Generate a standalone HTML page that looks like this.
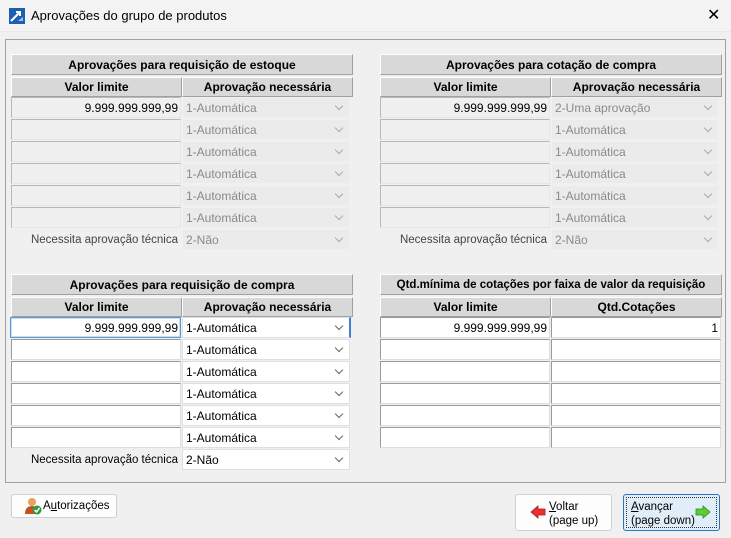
<!DOCTYPE html>
<html><head><meta charset="utf-8"><style>
*{box-sizing:border-box;margin:0;padding:0}
body{width:731px;height:538px;background:#f0f0f0;font-family:"Liberation Sans",sans-serif;font-size:12px;position:relative;overflow:hidden;color:#000}
.a{position:absolute}
.title{left:0;top:0;width:731px;height:32px;background:#f3f3f3;border-bottom:1px solid #e8e8e8}
.panel{left:5px;top:39px;width:721px;height:444px;border:1px solid #a0a0a0;background:#f0f0f0}
.hdr{height:21px;background:#d8d8d8;border:1px solid #fff;border-right-color:#a0a0a0;border-bottom-color:#a0a0a0;font-weight:bold;text-align:center;line-height:20px;font-size:12px}
.ch{height:20px;background:#d8d8d8;border:1px solid #fff;border-right-color:#a0a0a0;border-bottom-color:#a0a0a0;font-weight:bold;text-align:center;line-height:19px}
.tf{height:21px;background:#fff;border:1px solid #aaa;border-color:#999 #ddd #ddd #999;text-align:right;padding-right:2px;line-height:20px}
.tf.d{background:#f0f0f0;border-color:#b8b8b8 #e6e6e6 #e6e6e6 #b8b8b8}
.cb{height:21px;background:#fff;border:1px solid #e0e0e0;padding-left:3px;line-height:20px}
.cb.d{background:#ebebeb;border-color:#f0f0f0;color:#8a8a8a}
.cb:after{content:"";position:absolute;right:7px;top:5px;width:5px;height:5px;border-right:1px solid #666;border-bottom:1px solid #666;transform:rotate(45deg)}
.cb.d:after{border-color:#aaa}
.lbl{text-align:right;line-height:22px;font-size:11.5px}
.lbl.d{color:#444}
.btn{background:#fdfdfd;border:1px solid #d0d0d0;border-radius:3px}
</style></head><body>
<div class="a title"></div>
<svg class="a" style="left:9px;top:8px" width="16" height="16"><rect width="16" height="16" fill="#1f5fb0"/><path d="M2 13 L10 5 M7 4 L11 4 L11 8" stroke="#fff" stroke-width="2" fill="none"/><path d="M9 13 L14 9 L14 13Z" fill="#9fc3ea"/></svg>
<div class="a" style="left:31px;top:8px;font-size:13px">Aprovações do grupo de produtos</div>
<div class="a" style="left:707px;top:5px;font-size:16px">✕</div>
<div class="a panel"></div>

<div class="a hdr" style="left:11px;top:54px;width:342px">Aprovações para requisição de estoque</div>
<div class="a ch" style="left:11px;top:77px;width:171px">Valor limite</div>
<div class="a ch" style="left:182px;top:77px;width:171px">Aprovação necessária</div>
<div class="a tf d" style="left:11px;top:97px;width:170px">9.999.999.999,99</div><div class="a cb d" style="left:182px;top:97px;width:168px">1-Automática</div>
<div class="a tf d" style="left:11px;top:119px;width:170px"></div><div class="a cb d" style="left:182px;top:119px;width:168px">1-Automática</div>
<div class="a tf d" style="left:11px;top:141px;width:170px"></div><div class="a cb d" style="left:182px;top:141px;width:168px">1-Automática</div>
<div class="a tf d" style="left:11px;top:163px;width:170px"></div><div class="a cb d" style="left:182px;top:163px;width:168px">1-Automática</div>
<div class="a tf d" style="left:11px;top:185px;width:170px"></div><div class="a cb d" style="left:182px;top:185px;width:168px">1-Automática</div>
<div class="a tf d" style="left:11px;top:207px;width:170px"></div><div class="a cb d" style="left:182px;top:207px;width:168px">1-Automática</div>
<div class="a lbl d" style="left:11px;top:229px;width:167px">Necessita aprovação técnica</div><div class="a cb d" style="left:182px;top:229px;width:168px">2-Não</div>

<div class="a hdr" style="left:380px;top:54px;width:342px">Aprovações para cotação de compra</div>
<div class="a ch" style="left:380px;top:77px;width:171px">Valor limite</div>
<div class="a ch" style="left:551px;top:77px;width:171px">Aprovação necessária</div>
<div class="a tf d" style="left:380px;top:97px;width:170px">9.999.999.999,99</div><div class="a cb d" style="left:551px;top:97px;width:168px">2-Uma aprovação</div>
<div class="a tf d" style="left:380px;top:119px;width:170px"></div><div class="a cb d" style="left:551px;top:119px;width:168px">1-Automática</div>
<div class="a tf d" style="left:380px;top:141px;width:170px"></div><div class="a cb d" style="left:551px;top:141px;width:168px">1-Automática</div>
<div class="a tf d" style="left:380px;top:163px;width:170px"></div><div class="a cb d" style="left:551px;top:163px;width:168px">1-Automática</div>
<div class="a tf d" style="left:380px;top:185px;width:170px"></div><div class="a cb d" style="left:551px;top:185px;width:168px">1-Automática</div>
<div class="a tf d" style="left:380px;top:207px;width:170px"></div><div class="a cb d" style="left:551px;top:207px;width:168px">1-Automática</div>
<div class="a lbl d" style="left:380px;top:229px;width:167px">Necessita aprovação técnica</div><div class="a cb d" style="left:551px;top:229px;width:168px">2-Não</div>

<div class="a hdr" style="left:11px;top:274px;width:342px">Aprovações para requisição de compra</div>
<div class="a ch" style="left:11px;top:297px;width:171px">Valor limite</div>
<div class="a ch" style="left:182px;top:297px;width:171px">Aprovação necessária</div>
<div class="a tf" style="left:10px;top:317px;width:171px;border:1px solid #5b9bd5;box-shadow:inset 0 0 0 1px #cde">9.999.999.999,99</div><div class="a cb" style="left:182px;top:317px;width:169px;border-right:2px solid #3c7fd0">1-Automática</div>
<div class="a tf" style="left:11px;top:339px;width:170px"></div><div class="a cb" style="left:182px;top:339px;width:168px">1-Automática</div>
<div class="a tf" style="left:11px;top:361px;width:170px"></div><div class="a cb" style="left:182px;top:361px;width:168px">1-Automática</div>
<div class="a tf" style="left:11px;top:383px;width:170px"></div><div class="a cb" style="left:182px;top:383px;width:168px">1-Automática</div>
<div class="a tf" style="left:11px;top:405px;width:170px"></div><div class="a cb" style="left:182px;top:405px;width:168px">1-Automática</div>
<div class="a tf" style="left:11px;top:427px;width:170px"></div><div class="a cb" style="left:182px;top:427px;width:168px">1-Automática</div>
<div class="a lbl" style="left:11px;top:449px;width:167px">Necessita aprovação técnica</div><div class="a cb" style="left:182px;top:449px;width:168px">2-Não</div>

<div class="a hdr" style="left:380px;top:274px;width:342px;font-size:11.5px">Qtd.mínima de cotações por faixa de valor da requisição</div>
<div class="a ch" style="left:380px;top:297px;width:171px">Valor limite</div>
<div class="a ch" style="left:551px;top:297px;width:171px">Qtd.Cotações</div>
<div class="a tf" style="left:380px;top:317px;width:170px">9.999.999.999,99</div><div class="a tf" style="left:551px;top:317px;width:170px">1</div>
<div class="a tf" style="left:380px;top:339px;width:170px"></div><div class="a tf" style="left:551px;top:339px;width:170px"></div>
<div class="a tf" style="left:380px;top:361px;width:170px"></div><div class="a tf" style="left:551px;top:361px;width:170px"></div>
<div class="a tf" style="left:380px;top:383px;width:170px"></div><div class="a tf" style="left:551px;top:383px;width:170px"></div>
<div class="a tf" style="left:380px;top:405px;width:170px"></div><div class="a tf" style="left:551px;top:405px;width:170px"></div>
<div class="a tf" style="left:380px;top:427px;width:170px"></div><div class="a tf" style="left:551px;top:427px;width:170px"></div>

<div class="a btn" style="left:11px;top:494px;width:106px;height:24px"></div>
<svg class="a" style="left:24px;top:497px" width="18" height="18"><circle cx="8" cy="5" r="4" fill="#e8a060"/><path d="M1 17 Q1 9 8 9 Q15 9 15 17Z" fill="#c85020"/><circle cx="13" cy="13" r="4.5" fill="#2a9a3a"/><path d="M10.5 13 L12.5 15 L15.5 11" stroke="#fff" stroke-width="1.5" fill="none"/></svg>
<div class="a" style="left:43px;top:500px;font-size:11.5px">A<u>u</u>torizações</div>

<div class="a btn" style="left:515px;top:494px;width:97px;height:37px"></div>
<svg class="a" style="left:530px;top:505px" width="16" height="14"><path d="M1 7 L8 1 L8 4 L15 4 L15 10 L8 10 L8 13Z" fill="#e83030" stroke="#b01818" stroke-width="0.8"/></svg>
<div class="a" style="left:549px;top:500px;font-size:11.5px;line-height:14px"><u>V</u>oltar<br>(page up)</div>

<div class="a btn" style="left:623px;top:494px;width:97px;height:37px;background:#e0eef9;border:1px solid #2b72c8"></div>
<div class="a" style="left:626px;top:497px;width:91px;height:31px;border:1px dotted #333"></div>
<svg class="a" style="left:695px;top:505px" width="16" height="14"><path d="M15 7 L8 1 L8 4 L1 4 L1 10 L8 10 L8 13Z" fill="#5ccc30" stroke="#2a8a18" stroke-width="0.8"/></svg>
<div class="a" style="left:631px;top:500px;font-size:11.5px;line-height:14px"><u>A</u>vançar<br>(page down)</div>
</body></html>
